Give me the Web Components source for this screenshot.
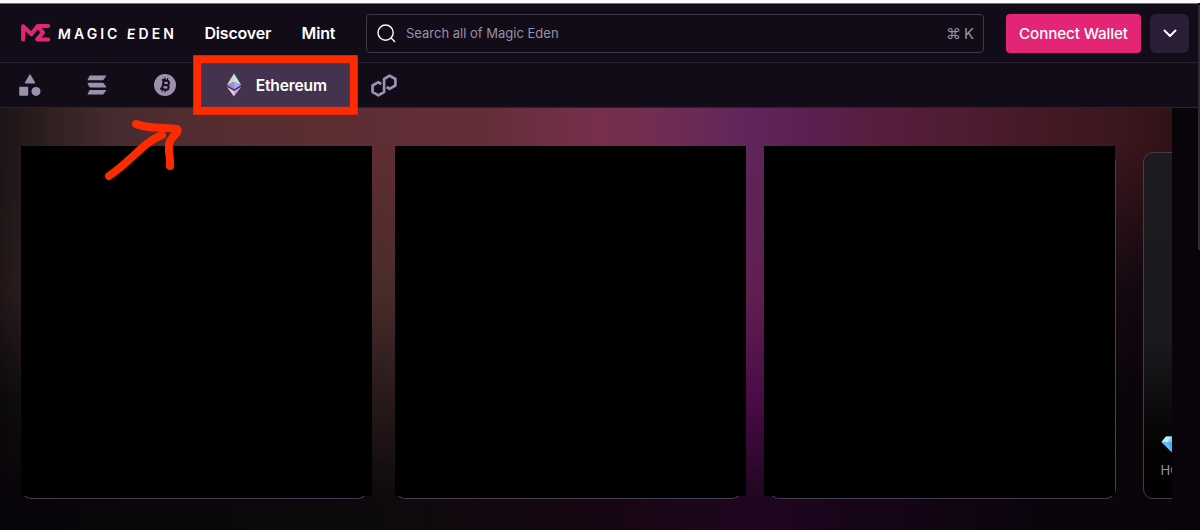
<!DOCTYPE html>
<html lang="en">
<head>
<meta charset="utf-8">
<title>Magic Eden</title>
<style>
    body {
        margin: 0;
        width: 1200px;
        height: 530px;
        overflow: hidden;
        background: #09040a;
        font-family: Inter, "Liberation Sans", sans-serif;
        color: #fff;
    }
</style>
</head>
<body>
<market-page>
    <site-header slot="header">
        <nav-link>Discover</nav-link>
        <nav-link>Mint</nav-link>
        <search-box slot="search" shortcut="K">Search all of Magic Eden</search-box>
        <wallet-button slot="wallet">Connect Wallet</wallet-button>
    </site-header>
    <chain-bar slot="chains">
        <chain-tab icon="all"></chain-tab>
        <chain-tab icon="solana"></chain-tab>
        <chain-tab icon="bitcoin"></chain-tab>
        <chain-tab icon="ethereum" active>Ethereum</chain-tab>
        <chain-tab icon="polygon"></chain-tab>
    </chain-bar>
    <hero-carousel>
        <feature-card covered></feature-card>
        <feature-card covered></feature-card>
        <feature-card covered style="--cover-x: -6px"></feature-card>
        <feature-card>HO</feature-card>
    </hero-carousel>
    <callout-mark slot="callout"></callout-mark>
</market-page>

<script>
const ICONS = {
    all: `<svg width="22" height="22" viewBox="0 0 22 22" fill="#9d90ae">
        <path d="M11 1L15.6 8.8H6.4Z" stroke="#9d90ae" stroke-width="1.2" stroke-linejoin="round"/>
        <rect x="0.2" y="12.8" width="9" height="9" rx="1"/><circle cx="17" cy="17.4" r="4.5"/></svg>`,
    solana: `<svg width="20" height="20" viewBox="0 0 20 20" fill="#9d90ae">
        <path d="M3.3 0.6H18.8Q19.6 0.6 19.1 1.3L16.6 4.8Q16.2 5.3 15.4 5.3H0.9Q0.2 5.3 0.6 4.7L2.3 1.2Q2.6 0.6 3.3 0.6Z"/>
        <path d="M0.8 7.7H15.4Q16.2 7.7 16.7 8.2L19.1 11.7Q19.6 12.4 18.8 12.4H3.3Q2.6 12.4 2.2 11.8L0.5 8.3Q0.2 7.7 0.8 7.7Z"/>
        <path d="M3.3 14.9H18.8Q19.6 14.9 19.1 15.6L16.6 19.1Q16.2 19.6 15.4 19.6H0.9Q0.2 19.6 0.6 19L2.3 15.5Q2.6 14.9 3.3 14.9Z"/></svg>`,
    bitcoin: `<svg width="22" height="22" viewBox="0 0 22 22">
        <circle cx="11" cy="11" r="11" fill="#9d90ae"/>
        <g transform="rotate(12 11 11)" fill="none" stroke="#140d19" stroke-width="2">
            <path d="M7 6.4H12.2A2.2 2.2 0 0 1 12.2 10.9H8.9M12.2 10.9H12.8A2.3 2.3 0 0 1 12.8 15.5H7M8.9 6.4V15.5"/>
            <path d="M9.5 3.8V6.4M12.3 3.8V6.4M9.5 15.5V18.2M12.3 15.5V18.2" stroke-width="1.3"/>
        </g></svg>`,
    ethereum: `<svg width="16" height="24" viewBox="0 0 16 24">
        <path d="M8 0.5L0.8 12L8 9Z" fill="#f0cdc4"/>
        <path d="M8 0.5L15.2 12L8 9Z" fill="#b9e8e4"/>
        <path d="M8 8.8L0.8 12L8 16.2Z" fill="#8197e6"/>
        <path d="M8 8.8L15.2 12L8 16.2Z" fill="#b0a5ee"/>
        <path d="M0.8 13.8L8 18L8 23.5Z" fill="#e8cbd6"/>
        <path d="M15.2 13.8L8 18L8 23.5Z" fill="#c9a4dc"/></svg>`,
    polygon: `<svg width="26" height="23" viewBox="0 0 26 23" fill="none" stroke="#9d90ae" stroke-width="2.7" stroke-linejoin="round">
        <path d="M10.2 10.2L7.4 8.2L1.6 11.5V18L7.4 21.3L13.1 18V5L18.6 1.7L24.4 5V11.5L18.6 14.8L15.7 13"/></svg>`
};

function define(name, html, setup) {
    customElements.define(name, class extends HTMLElement {
        constructor() {
            super();
            this.attachShadow({ mode: 'open' });
        }

        connectedCallback() {
            this.shadowRoot.innerHTML = html;
            if (setup) setup(this, this.shadowRoot);
        }
    });
}

define('market-page', `
    <style>
        :host {
            display: block;
            position: relative;
            height: 530px;
            overflow: hidden;
        }
        .page {
            display: flex;
            flex-direction: column;
            width: 1198px;
            height: 526px;
            border-top: 1px solid #777379;
            margin-top: 3px;
        }
        .top {
            position: absolute;
            left: 0;
            top: 0;
            width: 100%;
            height: 3px;
            background: #fcfcfc;
        }
        .scrollbar {
            position: absolute;
            right: 0;
            top: 5px;
            width: 2px;
            height: 245px;
            background: #302b33;
        }
    </style>
    <div class="top"></div>
    <div class="page">
        <slot name="header"></slot>
        <slot name="chains"></slot>
        <slot></slot>
    </div>
    <div class="scrollbar"></div>
    <slot name="callout"></slot>
`);

define('site-header', `
    <style>
        :host {
            display: flex;
            align-items: center;
            box-sizing: border-box;
            height: 59px;
            flex: none;
            padding: 0 9px 0 21px;
            background: #120c18;
            border-bottom: 1px solid #2b2333;
        }
        .logo {
            display: flex;
            align-items: center;
            width: 183.5px;
            gap: 7px;
        }
        .name {
            font-size: 14px;
            font-weight: 600;
            letter-spacing: 3.05px;
            white-space: nowrap;
        }
        .name i {
            display: inline-block;
            font-style: normal;
            transform: skewX(-5deg);
        }
        nav {
            display: flex;
            gap: 30.5px;
            width: 161px;
        }
        slot[name=search] {
            display: block;
        }
    </style>
    <div class="logo">
        <svg width="30" height="20" viewBox="0 0 30 20" fill="none" stroke="#e42575" stroke-width="4" stroke-linecap="round" stroke-linejoin="round">
            <path d="M2.1 16.5V3.2L10.4 11.2L16.6 3H27.2M16.6 3L22 9.6L16.2 16.4H27.2"/>
        </svg>
        <span class="name"><i>M</i>AGIC <i>E</i>DEN</span>
    </div>
    <nav><slot></slot></nav>
    <slot name="search"></slot>
    <slot name="wallet"></slot>
`);

define('nav-link', `
    <style>
        :host {
            display: block;
            font-size: 16px;
            font-weight: 600;
            line-height: 24px;
            letter-spacing: -0.2px;
        }
    </style>
    <slot></slot>
`);

define('search-box', `
    <style>
        :host {
            display: flex;
            align-items: center;
            box-sizing: border-box;
            width: 618.5px;
            height: 39px;
            margin-right: 22px;
            padding: 0 9px 0 10px;
            border: 1px solid #3f3847;
            border-radius: 4px;
            color: #9a8fa8;
            font-size: 13px;
        }
        .label {
            margin-left: 10.5px;
            flex: 1;
            line-height: 16px;
            padding-bottom: 1px;
        }
        .keys {
            display: flex;
            align-items: center;
            gap: 3px;
            font-size: 15px;
        }
    </style>
    <svg width="19" height="19" viewBox="0 0 19 19" fill="none" stroke="#fff" stroke-width="1.4" stroke-linecap="round">
        <circle cx="8.6" cy="8.6" r="7.6"/><path d="M14.1 14.1L17.6 17.6"/>
    </svg>
    <span class="label"><slot></slot></span>
    <span class="keys"><span>⌘</span><span class="key"></span></span>
`, (host, root) => {
    root.querySelector('.key').textContent = host.getAttribute('shortcut');
});

define('wallet-button', `
    <style>
        :host {
            display: flex;
            gap: 9px;
        }
        button {
            border: 0;
            margin: 0;
            padding: 0;
            height: 39px;
            border-radius: 4px;
            font: 500 15.2px Inter, sans-serif;
            color: #fff;
        }
        .connect {
            width: 135px;
            background: #e42575;
            letter-spacing: -0.1px;
            white-space: nowrap;
        }
        .more {
            display: flex;
            align-items: center;
            justify-content: center;
            width: 39px;
            border-radius: 6px;
            background: #2a1f37;
        }
    </style>
    <button class="connect"><slot></slot></button>
    <button class="more">
        <svg width="14" height="9" viewBox="0 0 14 9" fill="none" stroke="#fff" stroke-width="2" stroke-linecap="round" stroke-linejoin="round">
            <path d="M1.5 1.5L7 7L12.5 1.5"/>
        </svg>
    </button>
`);

define('chain-bar', `
    <style>
        :host {
            display: flex;
            box-sizing: border-box;
            height: 45px;
            flex: none;
            background: #120c18;
            border-bottom: 1px solid #2e2439;
        }
        ::slotted(:first-child) {
            margin-left: -4px;
        }
    </style>
    <slot></slot>
`);

define('chain-tab', `
    <style>
        :host {
            display: flex;
            align-items: center;
            justify-content: center;
            gap: 14px;
            box-sizing: border-box;
            width: 67.5px;
            font-size: 15.6px;
            font-weight: 600;
            letter-spacing: -0.15px;
        }
        :host([active]) {
            width: 151.5px;
            background: #43334e;
            padding-left: 4px;
        }
        .icon {
            display: flex;
        }
        slot {
            display: none;
        }
        :host([active]) slot {
            display: block;
        }
    </style>
    <span class="icon"></span>
    <slot></slot>
`, (host, root) => {
    root.querySelector('.icon').innerHTML = ICONS[host.getAttribute('icon')];
});

// The glow is a stack of horizontal gradients, each faded in further down
define('hero-carousel', `
    <style>
        :host {
            display: block;
            position: relative;
            flex: 1;
            width: 1172px;
            overflow: hidden;
        }
        .glow {
            position: absolute;
            inset: 0;
        }
        .g1 {
            background: linear-gradient(90deg, #1d1416 0, #30201f 50px, #452b2e 110px, #532d30 200px, #5d2d32 330px, #642e39 490px, #762f4c 600px, #702c52 660px, #60265a 745px, #5a2152 800px, #571e40 870px, #4f1c32 960px, #421822 1060px, #3c171f 1110px, #301215 1172px);
        }
        .g2 {
            background: linear-gradient(90deg, #211719 0, #2a1c1d 20px, #492c2b 383px, #602051 755px, #260d1c 1050px, #130910 1130px, #0b060b 1172px);
            -webkit-mask: linear-gradient(transparent 40px, #000 185px);
        }
        .g3 {
            background: linear-gradient(90deg, #0b090b 0, #110d0e 20px, #281a1a 383px, #4b0c48 755px, #10040f 1050px, #0a050a 1130px);
            -webkit-mask: linear-gradient(transparent 185px, #000 290px);
        }
        .g4 {
            background: linear-gradient(90deg, #08050a 0, #0d0a0c 383px, #150610 570px, #1f0620 755px, #18051a 850px, #0a040b 1050px);
            -webkit-mask: linear-gradient(transparent 290px, #000 392px);
        }
        .cards {
            position: relative;
            display: flex;
            gap: 27px;
            padding: 44px 0 0 21px;
        }
    </style>
    <div class="glow g1"></div>
    <div class="glow g2"></div>
    <div class="glow g3"></div>
    <div class="glow g4"></div>
    <div class="cards"><slot></slot></div>
`);

define('feature-card', `
    <style>
        :host {
            display: flex;
            flex-direction: column;
            justify-content: flex-end;
            position: relative;
            flex: none;
            box-sizing: border-box;
            width: 347px;
            height: 347px;
            padding: 0 17px 20px 16.5px;
            border: 1px solid #463b50;
            border-radius: 10px;
            background: linear-gradient(#1d1b20 0, #1a191d 55%, #030303 85%, #000 100%);
            color: #9a8fa8;
            font-size: 13px;
        }
        /* black panel over the artwork */
        .cover {
            display: none;
            position: absolute;
            left: var(--cover-x, -1px);
            top: -7px;
            width: 351px;
            height: 350px;
            background: #000;
        }
        :host([covered]) {
            border-right-color: #3d4757;
        }
        :host([covered]) .cover {
            display: block;
        }
        :host([covered]) .info {
            display: none;
        }
        .info svg {
            display: block;
            margin-bottom: 9px;
        }
    </style>
    <div class="info">
        <svg width="22" height="17" viewBox="0 0 22 17">
            <path d="M5 0.5H17L21.5 6L11 16.5L0.5 6Z" fill="#49aee9"/>
            <path d="M5 0.5H11L7 6H0.5Z" fill="#bdeafb"/>
            <path d="M11 0.5H17L15 6H7Z" fill="#79cdf4"/>
            <path d="M0.5 6H7L11 16.5Z" fill="#65bdf0"/>
        </svg>
        <slot></slot>
    </div>
    <div class="cover"></div>
`);

define('callout-mark', `
    <style>
        :host {
            position: absolute;
            left: 0;
            top: 0;
        }
        svg {
            display: block;
        }
    </style>
    <svg width="370" height="190" fill="none" stroke="#ff2b00" stroke-width="8">
        <rect x="197.2" y="59.2" width="156.6" height="51.6"/>
        <g stroke-linecap="round" stroke-linejoin="round">
            <path d="M109 176C121 168 133 156 143 147C150 141 157 137 162 135"/>
            <path d="M136 124C147 129 164 127 177 129C180 133 170 136 169 145C168 153 171 158 170 166"/>
        </g>
    </svg>
`);
</script>
</body>
</html>
